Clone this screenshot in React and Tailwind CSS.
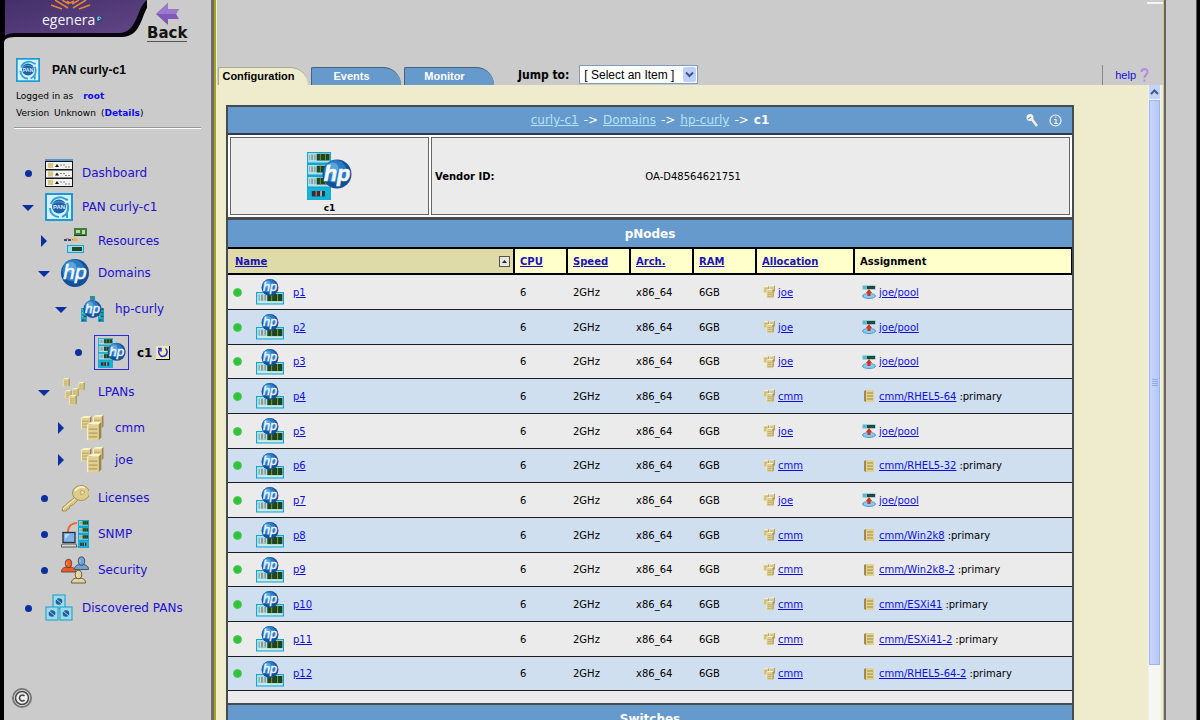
import React from 'react';

function HpBall({ cx, cy, r }) {
  return (
    <g>
      <circle cx={cx} cy={cy} r={r} fill="#14509a" />
      <circle cx={cx - r * 0.12} cy={cy - r * 0.18} r={r * 0.78} fill="#2a7cc2" />
      <circle cx={cx - r * 0.3} cy={cy - r * 0.4} r={r * 0.4} fill="#5aa5dc" />
      <text
        x={cx} y={cy + r * 0.45} textAnchor="middle" fontSize={r * 1.5} fontStyle="italic"
        fontFamily="Liberation Sans, sans-serif" fill="#f4f8ff" stroke="#f4f8ff" strokeWidth={r * 0.04}
      >hp</text>
    </g>
  );
}

function Blade({ x, y, w, h }) {
  return (
    <g>
      <rect x={x} y={y} width={w} height={h} fill="#a9e2ee" stroke="#12a5cf" strokeWidth="1" />
      <rect x={x + w * 0.08} y={y + h * 0.2} width={w * 0.27} height={h * 0.5} fill="#7f9c98" />
      <path d={`M${x + w * 0.14} ${y + h * 0.2}v${h * 0.5}M${x + w * 0.27} ${y + h * 0.2}v${h * 0.5}`} stroke="#dcebe6" strokeWidth={w * 0.04} />
      <rect x={x + w * 0.4} y={y + h * 0.12} width={w * 0.56} height={h * 0.64} fill="#1f4420" />
      <path d={`M${x + w * 0.56} ${y + h * 0.12}v${h * 0.64}M${x + w * 0.78} ${y + h * 0.12}v${h * 0.64}`} stroke="#6f9a3c" strokeWidth={w * 0.04} />
    </g>
  );
}

function Chassis({ x, y, w, h }) {
  const u = h / 4;
  return (
    <g>
      <rect x={x} y={y} width={w} height={h} fill="#1d9fd2" />
      {[0, 1, 2].map(i => <Blade key={i} x={x + 0.5} y={y + u * i + 0.5} w={w - 1} h={u - 1.5} />)}
      <rect x={x + 0.5} y={y + u * 3} width={w - 1} height={u - 0.5} fill="#14b4d6" />
      <rect x={x + w * 0.2} y={y + u * 3.25} width={w * 0.55} height={u * 0.45} fill="#24323c" />
      <rect x={x + w * 0.35} y={y + u * 3.25} width={w * 0.07} height={u * 0.45} fill="#c25b4a" />
      <rect x={x + w * 0.55} y={y + u * 3.25} width={w * 0.07} height={u * 0.45} fill="#a9c4d8" />
    </g>
  );
}

function Tower({ x, y, s = 1 }) {
  return (
    <g transform={`translate(${x} ${y}) scale(${s})`}>
      <path d="M0 2 L3 0 H11 L9 2Z" fill="#fbf3cc" />
      <path d="M9 2 L11 0 V12 L9 14Z" fill="#9c8648" />
      <rect x="0" y="2" width="9" height="12" fill="#e0cf90" />
      <path d="M1 5.5H8M1 8.5H8M1 11.5H8" stroke="#b39f62" />
      <path d="M0.5 2V14" stroke="#f8efc4" />
    </g>
  );
}

function PanMark({ size = 28 }) {
  return (
    <svg width={size} height={size} viewBox="0 0 28 28" className="shrink-0">
      <rect x="1" y="1" width="26" height="26" fill="#d9f0fb" stroke="#1a9ad8" strokeWidth="2" />
      <path d="M6 11C8 4 16 3 20 6M22 10C25 16 22 22 17 24M5 15C5 20 9 24 14 24M20 6l3 1M17 24l5-3M22 20v5" stroke="#2aa5dc" strokeWidth="2" fill="none" />
      <circle cx="14" cy="13.5" r="7" fill="#1f62a8" />
      <path d="M8 11C11 8 17 8 20 11" stroke="#5d9fd4" fill="none" />
      <text x="14" y="16" textAnchor="middle" fontSize="6" fontWeight="bold" fontFamily="Liberation Sans, sans-serif" fill="#dcecf8">PAN</text>
    </svg>
  );
}

function DashboardIcon() {
  return (
    <svg width="28" height="28" viewBox="0 0 28 28" className="shrink-0">
      <rect width="28" height="28" fill="#15161c" />
      <rect width="28" height="2" fill="#5b93cf" />
      {[3, 11.5, 20].map(y => (
        <g key={y}>
          <rect x="1" y={y} width="26" height="7" fill="#f1f1ee" />
          <rect x="3" y={y + 1} width="5" height="5" fill="#d8c684" />
          <path d={`M10 ${y + 5}l2-3l2 3z`} fill="#111" />
          <path d={`M15 ${y + 3}h6M20 ${y + 5}h6`} stroke="#8b8b8b" strokeDasharray="2 1" />
        </g>
      ))}
    </svg>
  );
}

function ResourcesIcon() {
  return (
    <svg width="28" height="28" viewBox="0 0 28 28" className="shrink-0">
      <rect x="13" y="1" width="13" height="8" fill="#3f7d3d" />
      <path d="M15 3h4v3h-4zM21 3h3v4h-3z" fill="#bcd9a4" />
      <path d="M13 8.500h12" stroke="#163f20" />
      <path d="M3 13h12" stroke="#27488a" strokeWidth="2" strokeDasharray="3 1" />
      <path d="M10 14l4-4l4 4z" fill="#e9b93c" />
      <path d="M5 12h3" stroke="#c74b35" />
      <rect x="6.500" y="18.500" width="16" height="7" fill="#9fdcea" stroke="#12a5cf" />
      <rect x="11" y="20" width="10" height="4" fill="#1d4a26" />
    </svg>
  );
}

function DomainsIcon() {
  return <svg width="28" height="28" viewBox="0 0 28 28" className="shrink-0"><HpBall cx={14} cy={14} r={14} /></svg>;
}

function HpFarmIcon() {
  return (
    <svg width="28" height="28" viewBox="0 0 28 28" className="shrink-0">
      <rect x="12" y="1" width="5" height="4" fill="#2a8f9a" />
      <Chassis x={3} y={13} w={6} h={14} />
      <Chassis x={20} y={13} w={6} h={14} />
      <HpBall cx={14.5} cy={14} r={9} />
    </svg>
  );
}

function ChassisIcon({ width, height }) {
  return (
    <svg width={width} height={height} viewBox="0 0 45 48" className="shrink-0">
      <Chassis x={0} y={0} w={24} h={48} />
      <HpBall cx={30} cy={22} r={14.5} />
    </svg>
  );
}

function LpansIcon() {
  return (
    <svg width="28" height="28" viewBox="0 0 28 28" className="shrink-0">
      <Tower x={2} y={0} s={0.6} /><Tower x={17} y={4} s={0.6} />
      <Tower x={4} y={12} s={0.6} /><Tower x={11} y={10} s={0.6} /><Tower x={8} y={17} s={0.7} />
    </svg>
  );
}

function LpanIcon({ size = 28 }) {
  return (
    <svg width={size} height={size} viewBox="0 0 28 28" className="shrink-0">
      <Tower x={3} y={2} s={0.95} /><Tower x={15} y={1} s={0.95} /><Tower x={9} y={8} s={1.3} />
    </svg>
  );
}

function KeyIcon() {
  return (
    <svg width="28" height="28" viewBox="0 0 28 28" className="shrink-0">
      <path d="M15 12L2 23l-1 4h4l1-2h2l1-3l3-1l6-6z" fill="#dcc883" stroke="#9b8446" strokeWidth="0.8" />
      <path d="M2 25L16 13" stroke="#fbf1c8" />
      <ellipse cx="20" cy="9" rx="8.500" ry="7.500" fill="#dfcc86" stroke="#9b8446" strokeWidth="0.800" />
      <path d="M14 7C16 3 21 2 24 4" stroke="#fff6d2" strokeWidth="1.500" fill="none" />
      <path d="M20 6l4 2l-4 3z" fill="#f6efd5" stroke="#9b8446" strokeWidth="0.600" />
    </svg>
  );
}

function SnmpIcon() {
  return (
    <svg width="28" height="28" viewBox="0 0 28 28" className="shrink-0">
      <Chassis x={17} y={0} w={11} h={28} />
      <path d="M7 12C7 6 11 3 16 3" stroke="#f0642c" strokeWidth="2" fill="none" />
      <rect x="2" y="12.500" width="12" height="10" fill="#7fb2ea" stroke="#28303c" strokeWidth="1.300" />
      <path d="M4 14h5l-5 5z" fill="#b8d8f8" />
      <path d="M1 24h14l1 3H0z" fill="#d6d6cc" stroke="#3a3a3a" strokeWidth="0.800" />
    </svg>
  );
}

function Person({ x, y, color }) {
  return (
    <g transform={`translate(${x} ${y})`} fill={color} stroke="#4a3a34" strokeWidth="0.800">
      <path d="M0 13C0 9 3 8 7 8C11 8 14 9 14 13z" />
      <ellipse cx="7" cy="4.500" rx="3.200" ry="4.200" />
      <path d="M5.500 3v3" stroke="#fff" strokeOpacity=".6" />
    </g>
  );
}

function SecurityIcon() {
  return (
    <svg width="28" height="28" viewBox="0 0 28 28" className="shrink-0">
      <Person x={13.5} y={0.5} color="#6aa3dc" />
      <Person x={0.5} y={3} color="#ee5b24" />
      <Person x={10.5} y={14} color="#e3d39c" />
    </svg>
  );
}

function DiscoveredIcon() {
  return (
    <svg width="28" height="28" viewBox="0 0 28 28" className="shrink-0">
      {[[8, 1], [1, 13], [15, 13]].map(([x, y]) => (
        <g key={x}>
          <rect x={x} y={y} width="12" height="13" fill="#9edcea" stroke="#27a9cc" strokeWidth="1.200" />
          <circle cx={x + 6} cy={y + 6.5} r="3.300" fill="#1f5d9c" />
          <path d={`M${x + 3} ${y + 4}l6 5`} stroke="#cfeaf6" strokeWidth=".8" />
        </g>
      ))}
    </svg>
  );
}

function PNodeIcon() {
  return (
    <svg width="28" height="26" viewBox="0 0 28 26" className="shrink-0">
      <Blade x={0.5} y={13.5} w={27} h={11.5} />
      <path d="M2 23h24" stroke="#e8f6e8" />
      <HpBall cx={14} cy={8.5} r={8.5} />
    </svg>
  );
}

function PoolIcon() {
  return (
    <svg width="14" height="14" viewBox="0 0 14 14" className="shrink-0">
      <ellipse cx="7" cy="11" rx="6.500" ry="2.500" fill="#8cc9ea" stroke="#4a9ad0" />
      <rect x="0.500" y="0.500" width="13" height="4" fill="#5db8d0" />
      <rect x="5" y="1" width="8" height="3" fill="#1d4a3a" />
      <path d="M7 4l3 4H8.500v3h-3V8H4z" fill="#d8301c" />
    </svg>
  );
}

function ServerIcon() {
  return (
    <svg width="14" height="14" viewBox="0 0 14 14" className="shrink-0">
      <path d="M2 2L4 1V13L2 12Z" fill="#a08a50" />
      <rect x="4" y="1" width="8" height="12" fill="#e2d08c" />
      <path d="M5 4h6M5 7h6M5 10h6" stroke="#a08a50" />
    </svg>
  );
}

const tree = [
  { label: 'Dashboard', level: 0, marker: 'dot', icon: <DashboardIcon />, gap: '' },
  { label: 'PAN curly-c1', level: 0, marker: 'open', icon: <PanMark />, gap: 'mt-1.5' },
  { label: 'Resources', level: 1, marker: 'closed', icon: <ResourcesIcon />, gap: 'mt-1.5' },
  { label: 'Domains', level: 1, marker: 'open', icon: <DomainsIcon />, gap: 'mt-1' },
  { label: 'hp-curly', level: 2, marker: 'open', icon: <HpFarmIcon />, gap: 'mt-2' },
  { label: 'c1', level: 3, marker: 'dot', icon: <ChassisIcon width={28} height={30} />, gap: 'mt-3', current: true },
  { label: 'LPANs', level: 1, marker: 'open', icon: <LpansIcon />, gap: 'mt-2' },
  { label: 'cmm', level: 2, marker: 'closed', icon: <LpanIcon />, gap: 'mt-2' },
  { label: 'joe', level: 2, marker: 'closed', icon: <LpanIcon />, gap: 'mt-1' },
  { label: 'Licenses', level: 1, marker: 'dot', icon: <KeyIcon />, gap: 'mt-2.5' },
  { label: 'SNMP', level: 1, marker: 'dot', icon: <SnmpIcon />, gap: 'mt-2' },
  { label: 'Security', level: 1, marker: 'dot', icon: <SecurityIcon />, gap: 'mt-2' },
  { label: 'Discovered PANs', level: 0, marker: 'dot', icon: <DiscoveredIcon />, gap: 'mt-2.5' },
];

const indent = ['pl-[18px]', 'pl-[34px]', 'pl-[51px]', 'pl-[68px]'];

const nodes = [
  { name: 'p1', lpan: 'joe', pool: true, target: 'joe/pool' },
  { name: 'p2', lpan: 'joe', pool: true, target: 'joe/pool' },
  { name: 'p3', lpan: 'joe', pool: true, target: 'joe/pool' },
  { name: 'p4', lpan: 'cmm', target: 'cmm/RHEL5-64' },
  { name: 'p5', lpan: 'joe', pool: true, target: 'joe/pool' },
  { name: 'p6', lpan: 'cmm', target: 'cmm/RHEL5-32' },
  { name: 'p7', lpan: 'joe', pool: true, target: 'joe/pool' },
  { name: 'p8', lpan: 'cmm', target: 'cmm/Win2k8' },
  { name: 'p9', lpan: 'cmm', target: 'cmm/Win2k8-2' },
  { name: 'p10', lpan: 'cmm', target: 'cmm/ESXi41' },
  { name: 'p11', lpan: 'cmm', target: 'cmm/ESXi41-2' },
  { name: 'p12', lpan: 'cmm', target: 'cmm/RHEL5-64-2' },
];

const columns = [
  { label: 'CPU', width: 'w-[53px]' },
  { label: 'Speed', width: 'w-[63px]' },
  { label: 'Arch.', width: 'w-[63px]' },
  { label: 'RAM', width: 'w-[63px]' },
  { label: 'Allocation', width: 'w-[98px]' },
];

function Marker({ kind, label }) {
  if (kind === 'dot') {
    return <span className="w-3 flex justify-center shrink-0"><span className="size-[7px] rounded-full bg-[#0a2fa0]" /></span>;
  }
  return (
    <button className="w-3 h-3 shrink-0 flex items-center justify-center" aria-label={`Toggle ${label}`}>
      <svg width="12" height="12" viewBox="0 0 12 12" fill="#0a2fa0">
        <path d={kind === 'open' ? 'M0 4h12l-6 6z' : 'M3 0v12l6-6z'} />
      </svg>
    </button>
  );
}

function TreeItem({ item }) {
  return (
    <li className={`flex items-center ${indent[item.level]} ${item.gap}`}>
      <Marker kind={item.marker} label={item.label} />
      {item.current ? (
        <>
          <span className="ml-2.5 size-[35px] shrink-0 border border-[#2b2bf0] flex items-center justify-center">{item.icon}</span>
          <span className="ml-2 text-xs font-bold text-black">{item.label}</span>
          <button aria-label="Refresh" className="ml-1 size-3.5 bg-[#f0e9b0] border-r border-b border-black flex items-center justify-center">
            <svg width="12" height="12" viewBox="0 0 12 12" fill="none" stroke="#2b2be0" strokeWidth="1.500">
              <path d="M3 3C0 6 3 11 6.500 10.300C10 10 11.500 5 8.500 2.500M1 2.500h3v3" />
            </svg>
          </button>
        </>
      ) : (
        <a href="#" className="ml-[11px] flex items-center gap-[9px] text-xs text-[#1d10d0] whitespace-nowrap">
          {item.icon}
          {item.label}
        </a>
      )}
    </li>
  );
}

function Sidebar() {
  return (
    <aside className="w-[207px] shrink-0 flex flex-col bg-[#cbcbcb]">
      <div className="h-[42px] flex">
        <svg width="143" height="42" viewBox="0 0 143 42" className="shrink-0">
          <defs>
            <linearGradient id="violet" x1="0" x2="1" y1="0" y2="1">
              <stop offset="0" stopColor="#43306a" />
              <stop offset="1" stopColor="#644688" />
            </linearGradient>
          </defs>
          <path d="M0 0H150C136 8 141 36 118 37H14C5 37 1 38 0 42Z" fill="#08060c" />
          <path d="M1 0H143C132 8 134 32 116 33H12C6 33 3 34 1 36Z" fill="url(#violet)" />
          <g stroke="#e8843a" strokeWidth="1.500" fill="none">
            <path d="M51 0L64 8M58 0L65 4M47 5L58 9M82 0L69 8M75 0L68 4M86 5L75 9M63 1L66 3L70 1" />
          </g>
          <text x="38" y="25" fontSize="14" fontFamily="Open Sans, sans-serif" fill="#f5f2fa">egenera</text>
          <circle cx="95" cy="19" r="3.500" fill="#274a80" />
          <path d="M94 17h2l1 1.500l-1 1H94zM94 17v4" stroke="#b8d4ee" strokeWidth=".7" fill="none" />
        </svg>
        <a href="#" className="flex flex-col items-center self-start pt-0.5 text-[15px] leading-4 font-bold text-[#141414]">
          <svg width="24" height="23" viewBox="0 0 24 23">
            <path d="M1 12L13 1V7H24L21 12L24 17H13V23Z" fill="#8158b8" />
            <path d="M1 12L13 1V7H24L21 12Z" fill="#9c78cc" />
          </svg>
          <span className="border-b border-[#555]">Back</span>
        </a>
      </div>

      <div className="pt-4 pl-3 flex items-center gap-3 font-['Liberation_Sans',sans-serif] text-xs font-bold">
        <PanMark size={24} />
        PAN curly-c1
      </div>
      <div className="mt-1.5 pl-3 text-[9px] leading-[17px]">
        <div className="flex gap-2.5">Logged in as <a href="#" className="font-bold text-[#0b0bee]">root</a></div>
        <div className="flex gap-[5px]">
          <span>Version</span>
          <span>Unknown</span>
          <span>(<a href="#" className="font-bold text-[#0b0bee]">Details</a>)</span>
        </div>
      </div>
      <hr className="mt-[5px] ml-2.5 mr-2.5 h-0.5 border-t border-b border-t-[#999] border-b-white" />

      <nav className="mt-[30px]">
        <ul>
          {tree.map(item => <TreeItem key={item.label} item={item} />)}
        </ul>
      </nav>

      <div className="mt-auto pl-2 pb-3">
        <svg width="20" height="20" viewBox="0 0 20 20">
          <circle cx="10" cy="10" r="9" fill="#efefef" stroke="#777" strokeWidth="2" />
          <circle cx="10" cy="10" r="6.500" fill="none" stroke="#444" strokeWidth="1.500" />
          <path d="M12.500 8C10.500 6 7.500 7.500 7.500 10S10.500 14 12.500 12" stroke="#444" strokeWidth="1.600" fill="none" />
        </svg>
      </div>
    </aside>
  );
}

function Tab({ label, active }) {
  return (
    <button
      className={`w-[90px] h-[18px] pr-2.5 rounded-tr-[18px] rounded-tl-xs border-t border-l text-[11px] font-bold ${
        active ? 'bg-[#eeeccc] border-[#a9a890] text-black' : 'bg-[#6699cc] border-[#47627f] text-white'
      }`}
    >
      {label}
    </button>
  );
}

function TopBar() {
  return (
    <header className="h-[85px] shrink-0 flex items-end pl-px pr-3.5 bg-[#cbcbcb] font-['Liberation_Sans',sans-serif]">
      <div className="flex gap-[3px]">
        <Tab label="Configuration" active />
        <Tab label="Events" />
        <Tab label="Monitor" />
      </div>
      <label htmlFor="jump" className="ml-6 pb-0.5 font-['DejaVu_Sans_Condensed','DejaVu_Sans',sans-serif] text-xs font-bold">Jump to:</label>
      <div className="ml-2.5 mb-px relative w-[119px] h-[19px]">
        <select id="jump" className="block appearance-none w-full h-full pl-1 border border-[#7f9db9] bg-white text-xs leading-4 text-black">
          <option>[ Select an Item ]</option>
        </select>
        <span className="pointer-events-none absolute right-0.5 top-0.5 w-[13px] h-[15px] rounded-xs bg-[#bfd0f8] flex items-center justify-center">
          <svg width="9" height="7" viewBox="0 0 9 7"><path d="M1 1.500l3.500 3.500L8 1.500" stroke="#3f5684" strokeWidth="2" fill="none" /></svg>
        </span>
      </div>
      <div className="ml-auto self-stretch flex flex-col justify-between items-end">
        <span className="mt-0.5 -mr-3.5 w-4 h-0.5 bg-[#f4f4f4]" />
        <a href="#" className="h-5 pl-3 border-l border-[#888] flex items-center gap-1 text-[11px] text-[#1410e0]">
          help
          <svg width="9" height="14" viewBox="0 0 9 14"><path d="M1.500 4C1.500 0 8 0 7.500 4C7.500 6.500 4.500 6.500 4.500 10M4.500 11.500v2" stroke="#b98be0" strokeWidth="2" fill="none" /></svg>
        </a>
      </div>
    </header>
  );
}

function Breadcrumb() {
  return (
    <div className="h-[28px] relative flex items-center justify-center border-b-2 border-[#2f3b4c] bg-[#6699cc] text-xs text-white">
      <nav className="flex gap-[5px]">
        <a href="#" className="underline text-[#b5e3fb]">curly-c1</a>
        <span>-&gt;</span>
        <a href="#" className="underline text-[#b5e3fb]">Domains</a>
        <span>-&gt;</span>
        <a href="#" className="underline text-[#b5e3fb]">hp-curly</a>
        <span>-&gt;</span>
        <b>c1</b>
      </nav>
      <div className="absolute right-2.5 flex gap-2.5">
        <button aria-label="Tools">
          <svg width="13" height="14" viewBox="0 0 13 14">
            <circle cx="4" cy="4.500" r="3.500" fill="#f4f2dc" />
            <path d="M5 5l6 8" stroke="#f4f2dc" strokeWidth="2.500" />
            <path d="M2 6l3-2" stroke="#6699cc" strokeWidth="1.200" />
          </svg>
        </button>
        <button aria-label="Information">
          <svg width="13" height="13" viewBox="0 0 13 13">
            <circle cx="6.500" cy="6.500" r="5.500" fill="none" stroke="#eef2dc" strokeWidth="1.200" />
            <path d="M5 5.500h2v4M5 9.500h4M6 3h1.500" stroke="#eef2dc" strokeWidth="1.200" fill="none" />
          </svg>
        </button>
      </div>
    </div>
  );
}

function NodeTable() {
  return (
    <table className="w-full table-fixed border-separate border-spacing-0 text-[10px] text-left">
      <thead>
        <tr className="h-7 bg-[#ffffcc]">
          <th className="px-[7px] border-y-2 border-r-2 border-black bg-[#dedba8]">
            <div className="flex items-center justify-between">
              <a href="#" className="underline text-[#1a12b8]">Name</a>
              <button aria-label="Sort ascending" className="size-[11px] -mr-1 border border-[#555] bg-[#e8e6e0] flex items-center justify-center">
                <svg width="5" height="3" viewBox="0 0 5 3"><path d="M0 3l2.500-3L5 3z" fill="#222" /></svg>
              </button>
            </div>
          </th>
          {columns.map(c => (
            <th key={c.label} className={`${c.width} px-[5px] border-y-2 border-r-2 border-black`}>
              <a href="#" className="underline text-[#1a12b8]">{c.label}</a>
            </th>
          ))}
          <th className="w-[217px] px-[5px] border-y-2 border-r border-black">Assignment</th>
        </tr>
      </thead>
      <tbody className="[&_td]:border-b [&_td]:border-[#1c1c1c] [&_td]:px-[5px]">
        {nodes.map(n => (
          <tr key={n.name} className="h-[35px] nth-[3n]:h-[34px] odd:bg-[#ebebeb] even:bg-[#cfdff0]">
            <td>
              <div className="flex items-center">
                <span className="size-[9px] rounded-full bg-[#2fc23a] border border-[#4fcb58]" />
                <span className="ml-3.5"><PNodeIcon /></span>
                <a href="#" className="ml-[9px] underline text-[#0f0fd8]">{n.name}</a>
              </div>
            </td>
            <td>6</td>
            <td>2GHz</td>
            <td>x86_64</td>
            <td>6GB</td>
            <td>
              <div className="flex items-center gap-0.5">
                <LpanIcon size={14} />
                <a href="#" className="underline text-[#0f0fd8]">{n.lpan}</a>
              </div>
            </td>
            <td>
              <div className="flex items-center gap-[3px] pl-0.5">
                {n.pool ? <PoolIcon /> : <ServerIcon />}
                <a href="#" className="underline text-[#0f0fd8]">{n.target}</a>
                {!n.pool && <span>:primary</span>}
              </div>
            </td>
          </tr>
        ))}
      </tbody>
    </table>
  );
}

function Scrollbar() {
  return (
    <div className="w-[13px] mr-0.5 shrink-0 flex flex-col bg-[#f7f7f2] border-x border-[#eef0fa]">
      <button aria-label="Scroll up" className="h-3.5 shrink-0 bg-[#c3d3fb] flex items-center justify-center">
        <svg width="9" height="6" viewBox="0 0 9 6"><path d="M1 5l3.500-3.500L8 5" stroke="#46598a" strokeWidth="2" fill="none" /></svg>
      </button>
      <div className="mt-px h-[89%] border border-[#9db5ee] bg-linear-to-r from-[#c8d6fb] to-[#b4c8f6] flex flex-col items-center justify-center gap-px">
        {[0, 1, 2, 3].map(i => <span key={i} className="w-1.5 h-px bg-[#8fabee]" />)}
      </div>
    </div>
  );
}

export default function App() {
  return (
    <div className="h-screen overflow-hidden flex bg-[#cbcbcb] text-black font-['DejaVu_Sans',sans-serif]">
      <div className="w-1 shrink-0 bg-black" />
      <Sidebar />
      <div className="w-1.5 shrink-0 bg-[#a5a413] border-l-3 border-l-[#6e6a70] border-r border-r-[#f0efd8]" />

      <div className="flex-1 min-w-0 flex flex-col">
        <TopBar />
        <div className="flex-1 min-h-0 flex bg-[#eeeccc]">
          <main className="flex-1 min-w-0 pl-[9px] pr-[74px] pt-5 overflow-hidden">
            <div className="border-2 border-[#454b50] bg-[#ebebeb]">
              <Breadcrumb />
              <div className="h-[82px] p-0.5 flex gap-0.5 bg-white">
                <div className="w-[199px] shrink-0 border border-[#666] bg-[#ebebeb] flex flex-col items-center justify-end text-[9px] leading-3 font-bold">
                  <ChassisIcon width={45} height={48} />
                  <span className="mt-0.5">c1</span>
                </div>
                <div className="flex-1 border border-[#666] bg-[#ebebeb] px-[3px] flex items-center text-[10px]">
                  <b className="w-1/3">Vendor ID:</b>
                  <span>OA-D48564621751</span>
                </div>
              </div>
              <h2 className="h-[30px] border-t-3 border-[#454b50] bg-[#6699cc] text-white text-xs font-bold flex items-center justify-center">pNodes</h2>
              <NodeTable />
              <div className="h-3" />
              <h2 className="h-[30px] border-t-2 border-[#454b50] bg-[#6699cc] text-white text-xs font-bold flex items-center justify-center">Switches</h2>
            </div>
          </main>
          <Scrollbar />
        </div>
      </div>

      <div className="w-[3px] shrink-0 bg-[#6b6266] border-l border-[#c9c68a]" />
      <div className="w-[30px] shrink-0" />
      <div className="w-1 shrink-0 bg-black border-l border-[#555]" />
    </div>
  );
}
